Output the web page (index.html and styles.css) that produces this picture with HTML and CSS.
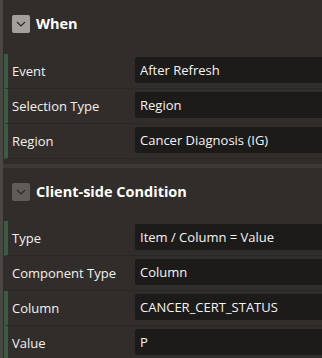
FILE: index.html
```html
<!DOCTYPE html>
<html lang="en">
<head>
    <meta charset="UTF-8">
    <meta name="viewport" content="width=device-width, initial-scale=1.0">
    <title>Dynamic Action</title>
    <link rel="stylesheet" href="styles.css">
</head>
<body>
    <div class="panel">
        <!-- When -->
        <div class="section">
            <div class="section-head first">
                <span class="toggle active">
                    <svg width="10" height="6" viewBox="0 0 10 6"><path d="M1 1 L5 5 L9 1" fill="none" stroke="#2b2825" stroke-width="1.2"/></svg>
                </span>
                <h2>When</h2>
            </div>
            <div class="row changed">
                <label>Event</label>
                <div class="field">After Refresh</div>
            </div>
            <div class="row changed">
                <label>Selection Type</label>
                <div class="field">Region</div>
            </div>
            <div class="row changed">
                <label>Region</label>
                <div class="field">Cancer Diagnosis (IG)</div>
            </div>
        </div>

        <div class="divider"></div>

        <!-- Client-side Condition -->
        <div class="section">
            <div class="section-head">
                <span class="toggle">
                    <svg width="10" height="6" viewBox="0 0 10 6"><path d="M1 1 L5 5 L9 1" fill="none" stroke="#2b2825" stroke-width="1.2"/></svg>
                </span>
                <h2>Client-side Condition</h2>
            </div>
            <div class="row changed">
                <label>Type</label>
                <div class="field">Item / Column = Value</div>
            </div>
            <div class="row">
                <label>Component Type</label>
                <div class="field">Column</div>
            </div>
            <div class="row changed">
                <label>Column</label>
                <div class="field">CANCER_CERT_STATUS</div>
            </div>
            <div class="row changed">
                <label>Value</label>
                <div class="field">P</div>
            </div>
        </div>
    </div>
</body>
</html>
```

FILE: styles.css
```css
* {
    margin: 0;
    padding: 0;
    box-sizing: border-box;
}

body {
    font-family: "Open Sans", "Noto Sans", sans-serif;
    background-color: #312d2a;
    color: #f2efec;
    height: 100vh;
    overflow: hidden;
}

.panel {
    border-left: 3px solid #4b4743;
    min-height: 100vh;
}

/* Section header */
.section-head {
    display: flex;
    align-items: flex-start;
    gap: 6px;
    height: 53px;
    padding: 15px 0 0 9px;
}

.section-head.first {
    height: 54px;
}

.section-head h2 {
    font-size: 14.5px;
    font-weight: 700;
    line-height: 18px;
    color: #ffffff;
}

.toggle {
    width: 18px;
    height: 18px;
    border-radius: 2px;
    background-color: #5f5b57;
    display: flex;
    align-items: center;
    justify-content: center;
}

.toggle.active {
    background-color: #a39f9a;
}

/* Property rows */
.row {
    display: flex;
    align-items: center;
    height: 35px;
    border-bottom: 1px solid #2a2724;
    border-left: 4px solid transparent;
    margin-left: 1px;
}

.row.changed {
    border-left-color: #3c5a44;
}

.row label {
    width: 127px;
    flex-shrink: 0;
    padding-left: 4px;
    font-size: 13px;
    color: #f4f1ee;
}

.field {
    flex: 1;
    height: 26px;
    margin-bottom: 2px;
    margin-right: -10px;
    padding-left: 5px;
    background-color: #1d1b1a;
    border-radius: 2px;
    font-size: 13px;
    line-height: 26px;
    color: #f6f4f2;
}

.divider {
    height: 4px;
    margin-top: 5px;
    background-color: #3d3935;
}
```
